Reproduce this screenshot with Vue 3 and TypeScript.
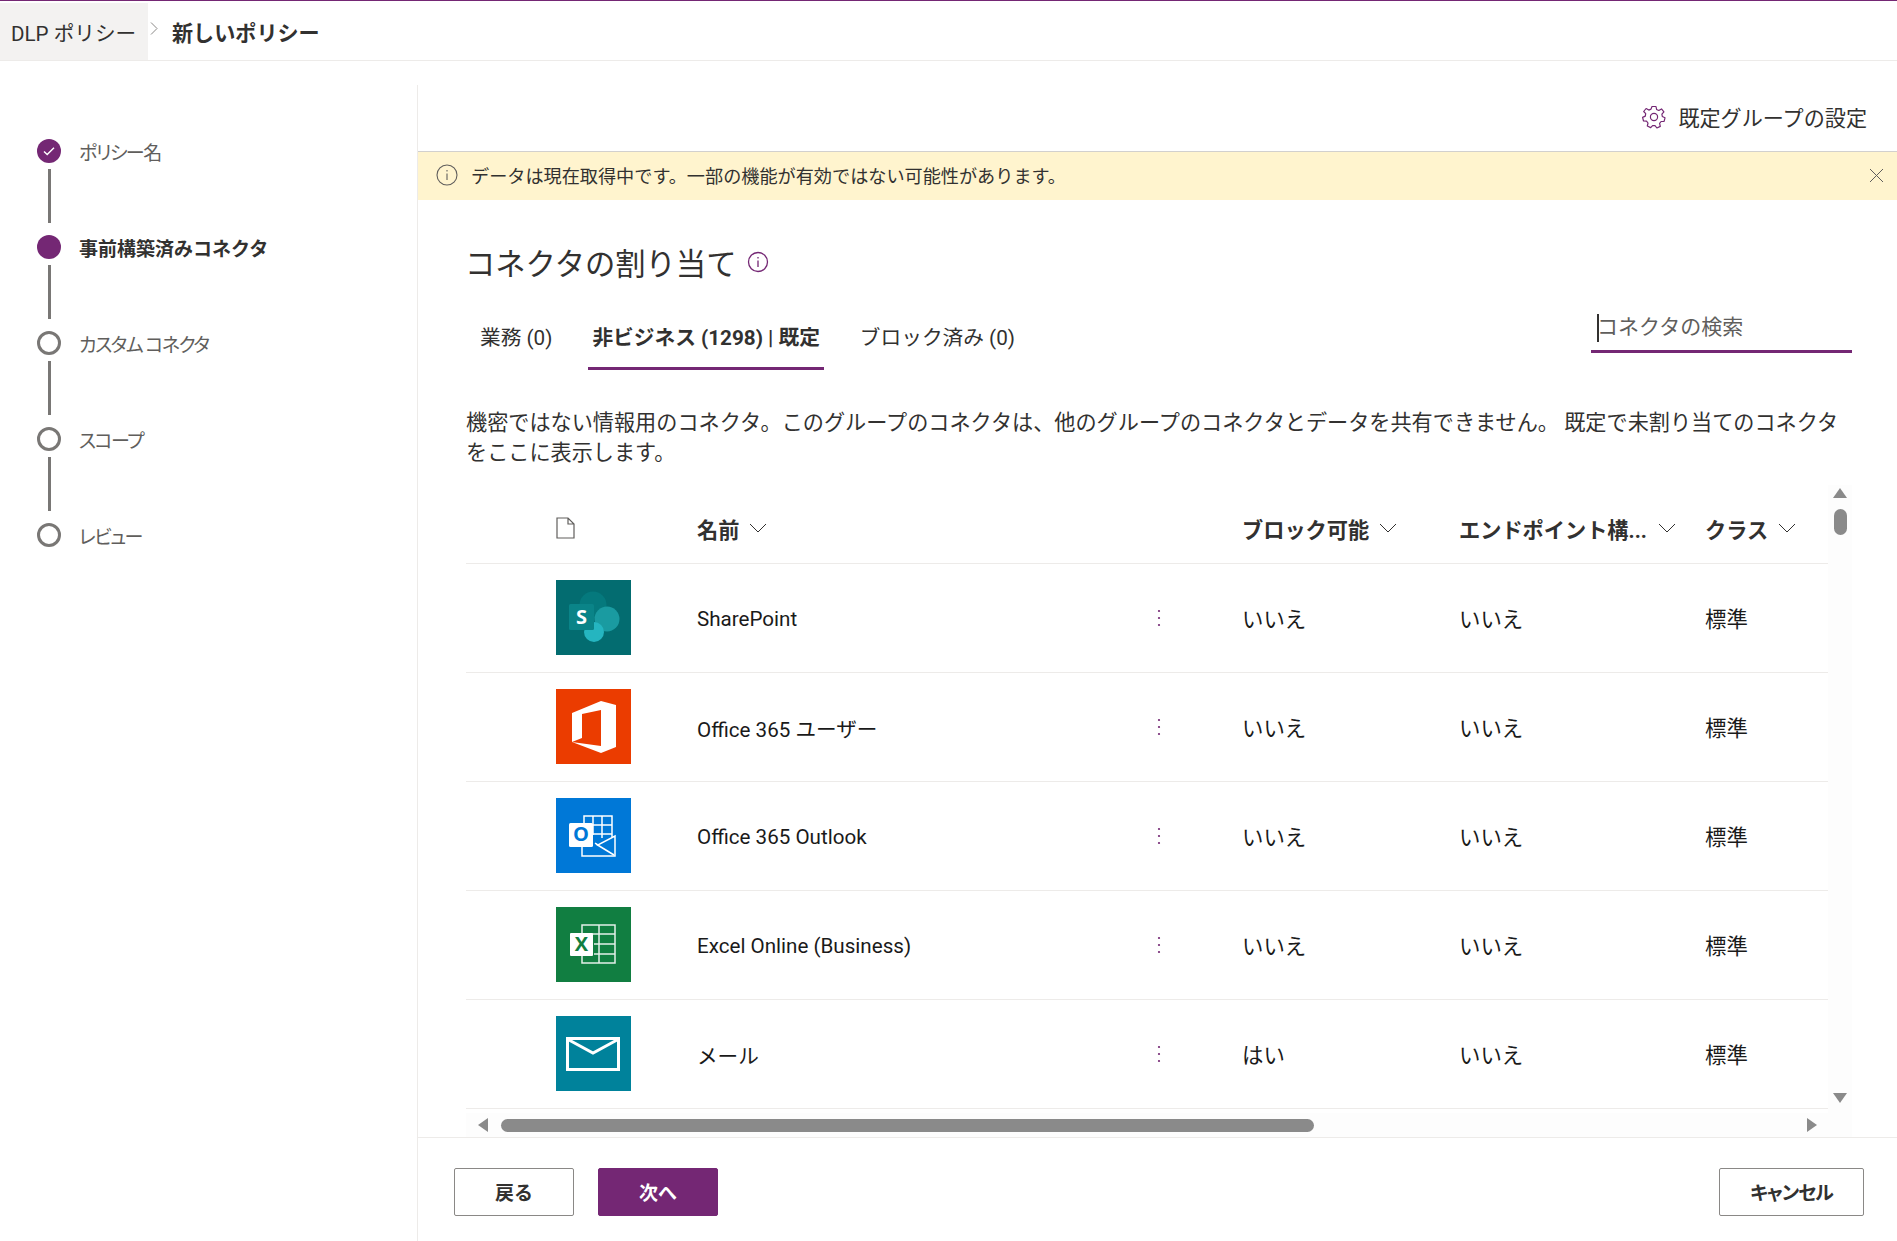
<script setup lang="ts">
type Step = { label: string; state: 'done' | 'active' | 'todo' }
type Row = { name: string; icon: string; block: string }

const steps: Step[] = [
  { label: 'ポリシー名', state: 'done' },
  { label: '事前構築済みコネクタ', state: 'active' },
  { label: 'カスタム コネクタ', state: 'todo' },
  { label: 'スコープ', state: 'todo' },
  { label: 'レビュー', state: 'todo' },
]

const tabs = [
  { label: '業務 (0)', active: false },
  { label: '非ビジネス (1298) | 既定', active: true },
  { label: 'ブロック済み (0)', active: false },
]

const rows: Row[] = [
  { name: 'SharePoint', icon: 'sharepoint', block: 'いいえ' },
  { name: 'Office 365 ユーザー', icon: 'office', block: 'いいえ' },
  { name: 'Office 365 Outlook', icon: 'outlook', block: 'いいえ' },
  { name: 'Excel Online (Business)', icon: 'excel', block: 'いいえ' },
  { name: 'メール', icon: 'mail', block: 'はい' },
]
</script>

<template>
  <div class="page">
    <header class="topbar">
      <div class="crumb-root">DLP ポリシー</div>
      <svg class="crumb-sep" width="8" height="13" viewBox="0 0 8 13" fill="none" stroke="#8a8886" stroke-width="1">
        <path d="M1 .5l6 6-6 6" />
      </svg>
      <div class="crumb-current">新しいポリシー</div>
    </header>

    <div class="body">
      <nav class="stepper">
        <div v-for="(step, i) in steps" :key="step.label" class="step">
          <div class="step-row">
            <span class="step-dot" :class="step.state">
              <svg v-if="step.state === 'done'" width="14" height="14" viewBox="0 0 14 14" fill="none" stroke="#fff" stroke-width="1.4">
                <path d="M2 7.5l3.2 3L12 3.8" />
              </svg>
            </span>
            <span class="step-label" :class="{ current: step.state === 'active' }">{{ step.label }}</span>
          </div>
          <div v-if="i < steps.length - 1" class="step-line" />
        </div>
      </nav>

      <main class="main">
        <div class="settings-row">
          <svg width="24" height="24" viewBox="0 0 24 24" fill="none" stroke="#742774" stroke-width="1.2" stroke-linejoin="round">
            <path d="M10 1.5h4l.6 3 2.2 1 2.7-1.6 2.4 3-2 2.2.4 2.4 2.7 1.3-.9 3.6-3 .1-1.5 1.9.7 3-3.4 1.6-1.9-2.4h-2.4L8.700 22.600l-3.400-1.600.7-3-1.500-1.900-3-.1-.9-3.600 2.700-1.300.4-2.400-2-2.200 2.400-3 2.700 1.600 2.200-1z" />
            <circle cx="12" cy="12" r="3.600" />
          </svg>
          <span>既定グループの設定</span>
        </div>

        <div class="banner">
          <svg class="banner-info" width="22" height="22" viewBox="0 0 22 22" fill="none" stroke="#605e5c" stroke-width="1.1">
            <circle cx="11" cy="11" r="10" />
            <path d="M11 9.500v6.500M11 6v1.500" />
          </svg>
          <span class="banner-text">データは現在取得中です。一部の機能が有効ではない可能性があります。</span>
          <svg class="banner-close" width="15" height="15" viewBox="0 0 15 15" stroke="#605e5c" stroke-width="1">
            <path d="M1 1l13 13M14 1L1 14" />
          </svg>
        </div>

        <div class="title-row">
          <h1>コネクタの割り当て</h1>
          <svg width="22" height="22" viewBox="0 0 22 22" fill="none" stroke="#742774" stroke-width="1.3">
            <circle cx="11" cy="11" r="9.500" />
            <path d="M11 9.500v6.500M11 6v1.500" />
          </svg>
        </div>

        <div class="tabs-row">
          <div class="tabs">
            <div v-for="t in tabs" :key="t.label" class="tab" :class="{ active: t.active }">{{ t.label }}</div>
          </div>
          <div class="search"><span class="caret" />コネクタの検索</div>
        </div>

        <p class="desc">機密ではない情報用のコネクタ。このグループのコネクタは、他のグループのコネクタとデータを共有できません。 既定で未割り当てのコネクタをここに表示します。</p>

        <div class="table-wrap">
          <div class="table">
            <div class="grid head">
              <span />
              <svg width="19" height="22" viewBox="0 0 19 22" fill="none" stroke="#605e5c" stroke-width="1.2">
                <path d="M1 1h11l6 6v14H1zM12 1v6h6" />
              </svg>
              <span class="th">名前
                <svg class="chev" width="18" height="10" viewBox="0 0 18 10" fill="none" stroke="#323130"><path d="M1 1l8 8 8-8" /></svg>
              </span>
              <span />
              <span class="th">ブロック可能
                <svg class="chev" width="18" height="10" viewBox="0 0 18 10" fill="none" stroke="#323130"><path d="M1 1l8 8 8-8" /></svg>
              </span>
              <span class="th">エンドポイント構...
                <svg class="chev wide" width="18" height="10" viewBox="0 0 18 10" fill="none" stroke="#323130"><path d="M1 1l8 8 8-8" /></svg>
              </span>
              <span class="th">クラス
                <svg class="chev" width="18" height="10" viewBox="0 0 18 10" fill="none" stroke="#323130"><path d="M1 1l8 8 8-8" /></svg>
              </span>
            </div>

            <div v-for="row in rows" :key="row.name" class="grid row">
              <span />
              <svg class="tile" width="75" height="75" viewBox="0 0 75 75">
                <template v-if="row.icon === 'sharepoint'">
                  <rect width="75" height="75" fill="#036c70" />
                  <circle cx="37" cy="25" r="13.500" fill="#05797d" />
                  <circle cx="51" cy="39" r="12.500" fill="#1a9ba1" />
                  <circle cx="38" cy="52" r="10" fill="#25b5c0" />
                  <rect x="13" y="24" width="25" height="26" rx="1.500" fill="#0a8488" />
                  <text x="25.500" y="44" text-anchor="middle" class="tile-letter" fill="#fff">S</text>
                </template>
                <template v-else-if="row.icon === 'office'">
                  <rect width="75" height="75" fill="#eb3c00" />
                  <path d="M16 24l29-12 15 4v42l-15 6-29-11 29 4V21l-19 4v24l-10 4z" fill="#fff" />
                </template>
                <template v-else-if="row.icon === 'outlook'">
                  <rect width="75" height="75" fill="#0078d7" />
                  <path d="M28 36V18h28v21M37 18v19M46 18v22M28 27h28M28 36h28" fill="none" stroke="#fff" stroke-width="1.500" />
                  <path d="M26 46v12h33V38L42 47l-3-2" fill="none" stroke="#fff" stroke-width="1.500" />
                  <path d="M40 46l18 11" fill="none" stroke="#fff" stroke-width="1.500" />
                  <rect x="13" y="25" width="24" height="24" rx="1.500" fill="#fff" />
                  <text x="25" y="43" text-anchor="middle" class="tile-letter" fill="#0078d7">O</text>
                </template>
                <template v-else-if="row.icon === 'excel'">
                  <rect width="75" height="75" fill="#117e41" />
                  <path d="M26 18h33v38H26zM43 18v38M26 27h33M38 37h21M38 47h21" fill="none" stroke="#e4f0e9" stroke-width="1.500" />
                  <rect x="14" y="26" width="23" height="23" rx="1" fill="#fff" />
                  <text x="25.500" y="44" text-anchor="middle" class="tile-letter" fill="#117e41">X</text>
                </template>
                <template v-else>
                  <rect width="75" height="75" fill="#00829b" />
                  <rect x="11.500" y="22.500" width="51" height="31" fill="none" stroke="#fff" stroke-width="3" />
                  <path d="M13 24l24 13 24-13" fill="none" stroke="#fff" stroke-width="3" />
                </template>
              </svg>
              <span class="cell-name">{{ row.name }}</span>
              <svg class="dots" width="4" height="18" viewBox="0 0 4 18" fill="#742774">
                <circle cx="2" cy="2" r="1.100" />
                <circle cx="2" cy="9" r="1.100" />
                <circle cx="2" cy="16" r="1.100" />
              </svg>
              <span class="cell-jp">{{ row.block }}</span>
              <span class="cell-jp">いいえ</span>
              <span class="cell-jp">標準</span>
            </div>
          </div>

          <div class="vscroll">
            <svg width="14" height="10" viewBox="0 0 14 10" fill="#8a8a8a"><path d="M7 0l7 10H0z" /></svg>
            <div class="vthumb" />
            <svg class="vdown" width="14" height="10" viewBox="0 0 14 10" fill="#8a8a8a"><path d="M7 10L0 0h14z" /></svg>
          </div>

          <div class="hscroll">
            <svg width="10" height="14" viewBox="0 0 10 14" fill="#8a8a8a"><path d="M0 7l10-7v14z" /></svg>
            <div class="hthumb" />
            <svg class="hright" width="10" height="14" viewBox="0 0 10 14" fill="#8a8a8a"><path d="M10 7L0 14V0z" /></svg>
          </div>
        </div>

        <footer class="footer">
          <button class="btn">戻る</button>
          <button class="btn primary">次へ</button>
          <button class="btn cancel">キャンセル</button>
        </footer>
      </main>
    </div>
  </div>
</template>

<style>
html, body { margin: 0; background: #fff; }
</style>

<style scoped>
.page {
  width: 1897px;
  height: 1241px;
  display: flex;
  flex-direction: column;
  overflow: hidden;
  font-family: Roboto, "Noto Sans CJK JP", sans-serif;
  font-size: 20.6px;
  color: #323130;
  border-top: 1px solid #742774;
  box-sizing: border-box;
}

/* ── パンくず ── */
.topbar {
  height: 60px;
  flex-shrink: 0;
  box-sizing: border-box;
  display: flex;
  align-items: stretch;
  padding-top: 2px;
  border-bottom: 1px solid #edebe9;
}
.crumb-root {
  width: 148px;
  padding-left: 11px;
  box-sizing: border-box;
  background: #f3f2f1;
  line-height: 62px;
}
.crumb-sep { margin: 19px 0 0 2px; }
.crumb-current {
  margin-left: 14px;
  font-size: 21.1px;
  font-weight: 700;
  line-height: 62px;
}

.body {
  flex: 1;
  min-height: 0;
  display: flex;
  padding-top: 24px;
}

/* ── ステッパー ── */
.stepper {
  width: 418px;
  flex-shrink: 0;
  box-sizing: border-box;
  padding: 54px 0 0 37px;
  border-right: 1px solid #edebe9;
}
.step-row {
  display: flex;
  align-items: center;
  gap: 18px;
  height: 24px;
}
.step-dot {
  width: 24px;
  height: 24px;
  box-sizing: border-box;
  border-radius: 50%;
  display: flex;
  align-items: center;
  justify-content: center;
  flex-shrink: 0;
}
.step-dot.done, .step-dot.active { background: #742774; }
.step-dot.todo { border: 3px solid #797775; }
.step-label {
  color: #605e5c;
  white-space: nowrap;
  font-size: 19px;
  font-feature-settings: "palt";
  letter-spacing: -1.5px;
}
.step-label.current {
  color: #323130;
  font-weight: 700;
  font-feature-settings: normal;
  letter-spacing: 0;
}
.step-line {
  width: 3px;
  height: 54px;
  margin: 6px 0 12px 11px;
  background: #797775;
}

/* ── メイン ── */
.main {
  flex: 1;
  min-width: 0;
  display: flex;
  flex-direction: column;
}
.settings-row {
  height: 66px;
  flex-shrink: 0;
  box-sizing: border-box;
  display: flex;
  align-items: center;
  justify-content: flex-end;
  gap: 12px;
  padding: 0 30px 2px 0;
  font-size: 21.1px;
}
.banner {
  height: 49px;
  flex-shrink: 0;
  box-sizing: border-box;
  display: flex;
  align-items: center;
  padding: 0 13px 2px 18px;
  background: #fff4ce;
  border-top: 1px solid #d2d0ce;
}
.banner-text { margin-left: 13px; font-size: 18.15px; color: #323130; }
.banner-close { margin-left: auto; }

.title-row {
  display: flex;
  align-items: center;
  gap: 11px;
  margin: 39px 0 0 47px;
  height: 46px;
}
.title-row h1 {
  margin: 0;
  font-size: 30.300px;
  font-weight: 400;
  color: #323130;
}

.tabs-row {
  display: flex;
  justify-content: space-between;
  align-items: flex-start;
  margin: 22px 45px 0 58px;
  height: 60px;
}
.tabs {
  display: flex;
  gap: 32px;
  margin-top: 6px;
  font-size: 20.7px;
}
.tab {
  padding: 0 4px;
  height: 57px;
  line-height: 50px;
  box-sizing: border-box;
  white-space: nowrap;
}
.tab.active {
  font-weight: 700;
  border-bottom: 3px solid #742774;
}
.search {
  width: 261px;
  height: 46px;
  box-sizing: border-box;
  border-bottom: 3px solid #742774;
  padding-left: 6px;
  line-height: 40px;
  font-size: 21px;
  color: #605e5c;
  position: relative;
}
.caret {
  position: absolute;
  left: 6px;
  top: 7px;
  width: 2px;
  height: 28px;
  background: #323130;
}

.desc {
  margin: 41px 50px 0 48px;
  line-height: 30px;
  font-size: 21.15px;
  color: #323130;
  height: 60px;
}

/* ── テーブル ── */
.table-wrap {
  margin: 17px 0 0 48px;
  display: grid;
  grid-template-columns: 1362px 24px;
  grid-template-rows: 1fr 24px;
  flex: 1;
  min-height: 0;
}
.table { min-height: 0; overflow: hidden; }
.grid {
  display: grid;
  grid-template-columns: 90px 141px 453px 92px 217px 246px 1fr;
  align-items: center;
  box-sizing: border-box;
  border-bottom: 1px solid #edebe9;
  color: #1a1a1a;
}
.head { height: 79px; padding-top: 8px; font-size: 21.2px; font-weight: 700; color: #323130; }
.row { height: 109px; padding-bottom: 1px; }
.cell-name { padding-top: 2px; }
.cell-jp { font-size: 21.4px; }
.th { white-space: nowrap; display: flex; align-items: center; }
.chev { margin-left: 10px; flex-shrink: 0; }
.chev.wide { margin-left: 11px; }
.tile { display: block; }
.tile-letter {
  font-family: "Open Sans", sans-serif;
  font-size: 20px;
  font-weight: 700;
}
.dots { margin-left: 7px; }
.vscroll {
  grid-row: 1 / 3;
  grid-column: 2;
  background: #fdfdfd;
  display: flex;
  flex-direction: column;
  align-items: center;
  padding: 3px 0 34px;
}
.vthumb {
  width: 13px;
  height: 26px;
  margin-top: 11px;
  border-radius: 7px;
  background: #8a8a8a;
}
.vdown { margin-top: auto; }
.hscroll {
  background: #fdfdfd;
  display: flex;
  align-items: center;
  padding: 0 11px 0 12px;
}
.hthumb {
  width: 813px;
  height: 13px;
  margin-left: 13px;
  border-radius: 7px;
  background: #8a8a8a;
}
.hright { margin-left: auto; }

/* ── フッター ── */
.footer {
  height: 104px;
  flex-shrink: 0;
  box-sizing: border-box;
  display: flex;
  align-items: flex-start;
  gap: 24px;
  padding: 30px 33px 0 36px;
  border-top: 1px solid #edebe9;
}
.btn {
  width: 120px;
  height: 48px;
  padding: 0 0 2px;
  border: 1px solid #8a8886;
  border-radius: 2px;
  background: #fff;
  color: #323130;
  font-family: inherit;
  font-size: 19px;
  font-weight: 700;
}
.btn.primary { background: #742774; border-color: #742774; color: #fff; }
.btn.cancel { width: 145px; margin-left: auto; font-feature-settings: "palt"; letter-spacing: -1px; }
</style>
